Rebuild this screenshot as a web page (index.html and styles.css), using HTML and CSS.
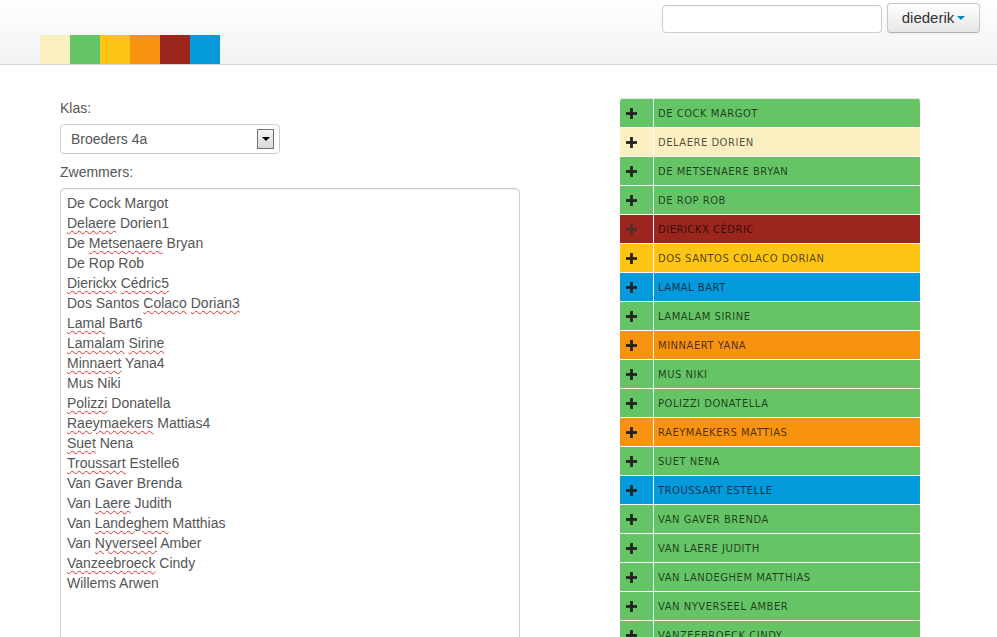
FILE: index.html
```html
<!DOCTYPE html>
<html lang="nl">
<head>
<meta charset="utf-8">
<title>Zwemmers</title>
<link rel="stylesheet" href="styles.css">
</head>
<body>
<header class="navbar">
  <div class="strip">
    <span class="sw cream"></span><span class="sw green"></span><span class="sw yellow"></span><span class="sw orange"></span><span class="sw red"></span><span class="sw blue"></span>
  </div>
  <div class="tools">
    <input class="search" type="text">
    <button class="user">diederik <span class="caret"></span></button>
  </div>
</header>
<main class="main">
  <section class="left">
    <label class="lbl">Klas:</label>
    <div class="select"><span>Broeders 4a</span><span class="arrow"></span></div>
    <label class="lbl lbl2">Zwemmers:</label>
    <div class="textarea">
      <div>De Cock Margot</div>
      <div><u>Delaere</u> Dorien1</div>
      <div>De <u>Metsenaere</u> Bryan</div>
      <div>De Rop Rob</div>
      <div><u>Dierickx</u> <u>Cédric5</u></div>
      <div>Dos Santos <u>Colaco</u> <u>Dorian3</u></div>
      <div><u>Lamal</u> Bart6</div>
      <div><u>Lamalam</u> <u>Sirine</u></div>
      <div><u>Minnaert</u> Yana4</div>
      <div>Mus Niki</div>
      <div><u>Polizzi</u> Donatella</div>
      <div><u>Raeymaekers</u> Mattias4</div>
      <div><u>Suet</u> Nena</div>
      <div><u>Troussart</u> Estelle6</div>
      <div>Van Gaver Brenda</div>
      <div>Van <u>Laere</u> Judith</div>
      <div>Van <u>Landeghem</u> Matthias</div>
      <div>Van <u>Nyverseel</u> Amber</div>
      <div><u>Vanzeebroeck</u> Cindy</div>
      <div>Willems Arwen</div>
    </div>
  </section>
  <section class="right">
    <div class="list">
      <div class="row green"><span class="ic"><svg viewBox="0 0 12 12"><rect x="0" y="4.5" width="12" height="3"/><rect x="4.5" y="0" width="3" height="12"/></svg></span><span class="nm">De Cock Margot</span></div>
      <div class="row cream"><span class="ic"><svg viewBox="0 0 12 12"><rect x="0" y="4.5" width="12" height="3"/><rect x="4.5" y="0" width="3" height="12"/></svg></span><span class="nm">Delaere Dorien</span></div>
      <div class="row green"><span class="ic"><svg viewBox="0 0 12 12"><rect x="0" y="4.5" width="12" height="3"/><rect x="4.5" y="0" width="3" height="12"/></svg></span><span class="nm">De Metsenaere Bryan</span></div>
      <div class="row green"><span class="ic"><svg viewBox="0 0 12 12"><rect x="0" y="4.5" width="12" height="3"/><rect x="4.5" y="0" width="3" height="12"/></svg></span><span class="nm">De Rop Rob</span></div>
      <div class="row red"><span class="ic"><svg viewBox="0 0 12 12"><rect x="0" y="4.5" width="12" height="3"/><rect x="4.5" y="0" width="3" height="12"/></svg></span><span class="nm">Dierickx Cédric</span></div>
      <div class="row yellow"><span class="ic"><svg viewBox="0 0 12 12"><rect x="0" y="4.5" width="12" height="3"/><rect x="4.5" y="0" width="3" height="12"/></svg></span><span class="nm">Dos Santos Colaco Dorian</span></div>
      <div class="row blue"><span class="ic"><svg viewBox="0 0 12 12"><rect x="0" y="4.5" width="12" height="3"/><rect x="4.5" y="0" width="3" height="12"/></svg></span><span class="nm">Lamal Bart</span></div>
      <div class="row green"><span class="ic"><svg viewBox="0 0 12 12"><rect x="0" y="4.5" width="12" height="3"/><rect x="4.5" y="0" width="3" height="12"/></svg></span><span class="nm">Lamalam Sirine</span></div>
      <div class="row orange"><span class="ic"><svg viewBox="0 0 12 12"><rect x="0" y="4.5" width="12" height="3"/><rect x="4.5" y="0" width="3" height="12"/></svg></span><span class="nm">Minnaert Yana</span></div>
      <div class="row green"><span class="ic"><svg viewBox="0 0 12 12"><rect x="0" y="4.5" width="12" height="3"/><rect x="4.5" y="0" width="3" height="12"/></svg></span><span class="nm">Mus Niki</span></div>
      <div class="row green"><span class="ic"><svg viewBox="0 0 12 12"><rect x="0" y="4.5" width="12" height="3"/><rect x="4.5" y="0" width="3" height="12"/></svg></span><span class="nm">Polizzi Donatella</span></div>
      <div class="row orange"><span class="ic"><svg viewBox="0 0 12 12"><rect x="0" y="4.5" width="12" height="3"/><rect x="4.5" y="0" width="3" height="12"/></svg></span><span class="nm">Raeymaekers Mattias</span></div>
      <div class="row green"><span class="ic"><svg viewBox="0 0 12 12"><rect x="0" y="4.5" width="12" height="3"/><rect x="4.5" y="0" width="3" height="12"/></svg></span><span class="nm">Suet Nena</span></div>
      <div class="row blue"><span class="ic"><svg viewBox="0 0 12 12"><rect x="0" y="4.5" width="12" height="3"/><rect x="4.5" y="0" width="3" height="12"/></svg></span><span class="nm">Troussart Estelle</span></div>
      <div class="row green"><span class="ic"><svg viewBox="0 0 12 12"><rect x="0" y="4.5" width="12" height="3"/><rect x="4.5" y="0" width="3" height="12"/></svg></span><span class="nm">Van Gaver Brenda</span></div>
      <div class="row green"><span class="ic"><svg viewBox="0 0 12 12"><rect x="0" y="4.5" width="12" height="3"/><rect x="4.5" y="0" width="3" height="12"/></svg></span><span class="nm">Van Laere Judith</span></div>
      <div class="row green"><span class="ic"><svg viewBox="0 0 12 12"><rect x="0" y="4.5" width="12" height="3"/><rect x="4.5" y="0" width="3" height="12"/></svg></span><span class="nm">Van Landeghem Matthias</span></div>
      <div class="row green"><span class="ic"><svg viewBox="0 0 12 12"><rect x="0" y="4.5" width="12" height="3"/><rect x="4.5" y="0" width="3" height="12"/></svg></span><span class="nm">Van Nyverseel Amber</span></div>
      <div class="row green"><span class="ic"><svg viewBox="0 0 12 12"><rect x="0" y="4.5" width="12" height="3"/><rect x="4.5" y="0" width="3" height="12"/></svg></span><span class="nm">Vanzeebroeck Cindy</span></div>
      <div class="row green"><span class="ic"><svg viewBox="0 0 12 12"><rect x="0" y="4.5" width="12" height="3"/><rect x="4.5" y="0" width="3" height="12"/></svg></span><span class="nm">Willems Arwen</span></div>
    </div>
  </section>
</main>
</body>
</html>
```

FILE: styles.css
```css
* { box-sizing: border-box; }
html, body { margin: 0; padding: 0; }
body {
  background: #fff;
  font-family: "Liberation Sans", Arial, sans-serif;
  font-size: 14px;
  color: #555;
  overflow: hidden;
  height: 637px;
}
.navbar {
  height: 65px;
  background: linear-gradient(#ffffff, #f2f2f2);
  border-bottom: 1px solid #d4d4d4;
  display: flex;
  justify-content: space-between;
  padding: 0 17px 0 40px;
}
.strip { display: flex; align-self: flex-end; }
.sw { width: 30px; height: 29px; display: block; }
.sw.cream { background: #faefc0; }
.sw.green { background: #65c466; }
.sw.yellow { background: #fec515; }
.sw.orange { background: #f7930e; }
.sw.red { background: #9c261e; }
.sw.blue { background: #049adc; }
.tools { display: flex; align-items: flex-start; padding-top: 3px; gap: 5px; }
.search {
  margin-top: 2px;
  width: 220px;
  height: 28px;
  border: 1px solid #ccc;
  border-radius: 4px;
  background: #fff;
  box-shadow: inset 0 1px 1px rgba(0,0,0,0.075);
  outline: none;
}
.user {
  width: 93px;
  height: 30px;
  border: 1px solid #c8c8c8;
  border-bottom-color: #b3b3b3;
  border-radius: 4px;
  background: linear-gradient(#ffffff, #e6e6e6);
  box-shadow: inset 0 1px 0 rgba(255,255,255,.2), 0 1px 2px rgba(0,0,0,.05);
  font-family: "Liberation Sans", Arial, sans-serif;
  font-size: 15px;
  color: #333;
  padding: 0 0 2px 0;
  display: flex;
  align-items: center;
  justify-content: center;
  gap: 3px;
}
.caret {
  display: inline-block;
  width: 0; height: 0;
  border-left: 4px solid transparent;
  border-right: 4px solid transparent;
  border-top: 4px solid #0088cc;
  margin-top: 2px;
}
.main {
  display: flex;
  gap: 100px;
  padding: 33px 0 0 60px;
}
.left { width: 460px; display: flex; flex-direction: column; }
.lbl { display: block; line-height: 20px; margin-bottom: 6px; color: #555; }
.lbl2 { margin-top: 8px; margin-bottom: 6px; }
.select {
  width: 220px;
  height: 30px;
  border: 1px solid #ccc;
  border-radius: 4px;
  display: flex;
  align-items: center;
  justify-content: space-between;
  padding: 0 5px 0 10px;
  color: #555;
}
.arrow {
  width: 17px; height: 20px;
  border: 1px solid #707070;
  background: linear-gradient(#f5f5f5, #d8d8d8);
  position: relative;
}
.arrow::after {
  content: "";
  position: absolute;
  left: 4px; top: 7px;
  border-left: 4px solid transparent;
  border-right: 4px solid transparent;
  border-top: 4px solid #000;
}
.textarea {
  width: 460px;
  height: 470px;
  border: 1px solid #ccc;
  border-radius: 4px;
  padding: 4px 6px;
  line-height: 20px;
  color: #555;
  box-shadow: inset 0 1px 1px rgba(0,0,0,0.075);
}
.textarea u {
  text-decoration: underline wavy #e03030;
  text-decoration-thickness: 1px;
  text-underline-offset: 2px;
}
.right { width: 300px; }
.list { border-radius: 4px 4px 0 0; overflow: hidden; }
.row {
  display: flex;
  height: 29px;
  border-top: 1px solid #fff;
}
.row:first-child { border-top: 1px solid #e6e6e6; }
.row.green { background: #65c466; }
.row.cream { background: #faefc0; }
.row.yellow { background: #fec515; }
.row.orange { background: #f7930e; }
.row.red { background: #9c261e; }
.row.blue { background: #049adc; }
.ic {
  width: 34px;
  border-right: 1px solid #fff;
  display: flex;
  align-items: center;
  justify-content: flex-start;
  padding-left: 6px;
}
.ic svg { width: 11px; height: 11px; fill: #222; display: block; }
.row.red .ic svg { fill: #333; opacity: .75; }
.nm {
  padding-left: 4px;
  display: flex;
  align-items: center;
  font-family: "DejaVu Sans", Verdana, sans-serif;
  font-size: 10px;
  letter-spacing: 0.5px;
  text-transform: uppercase;
  color: rgba(0,0,0,0.7);
}
```
